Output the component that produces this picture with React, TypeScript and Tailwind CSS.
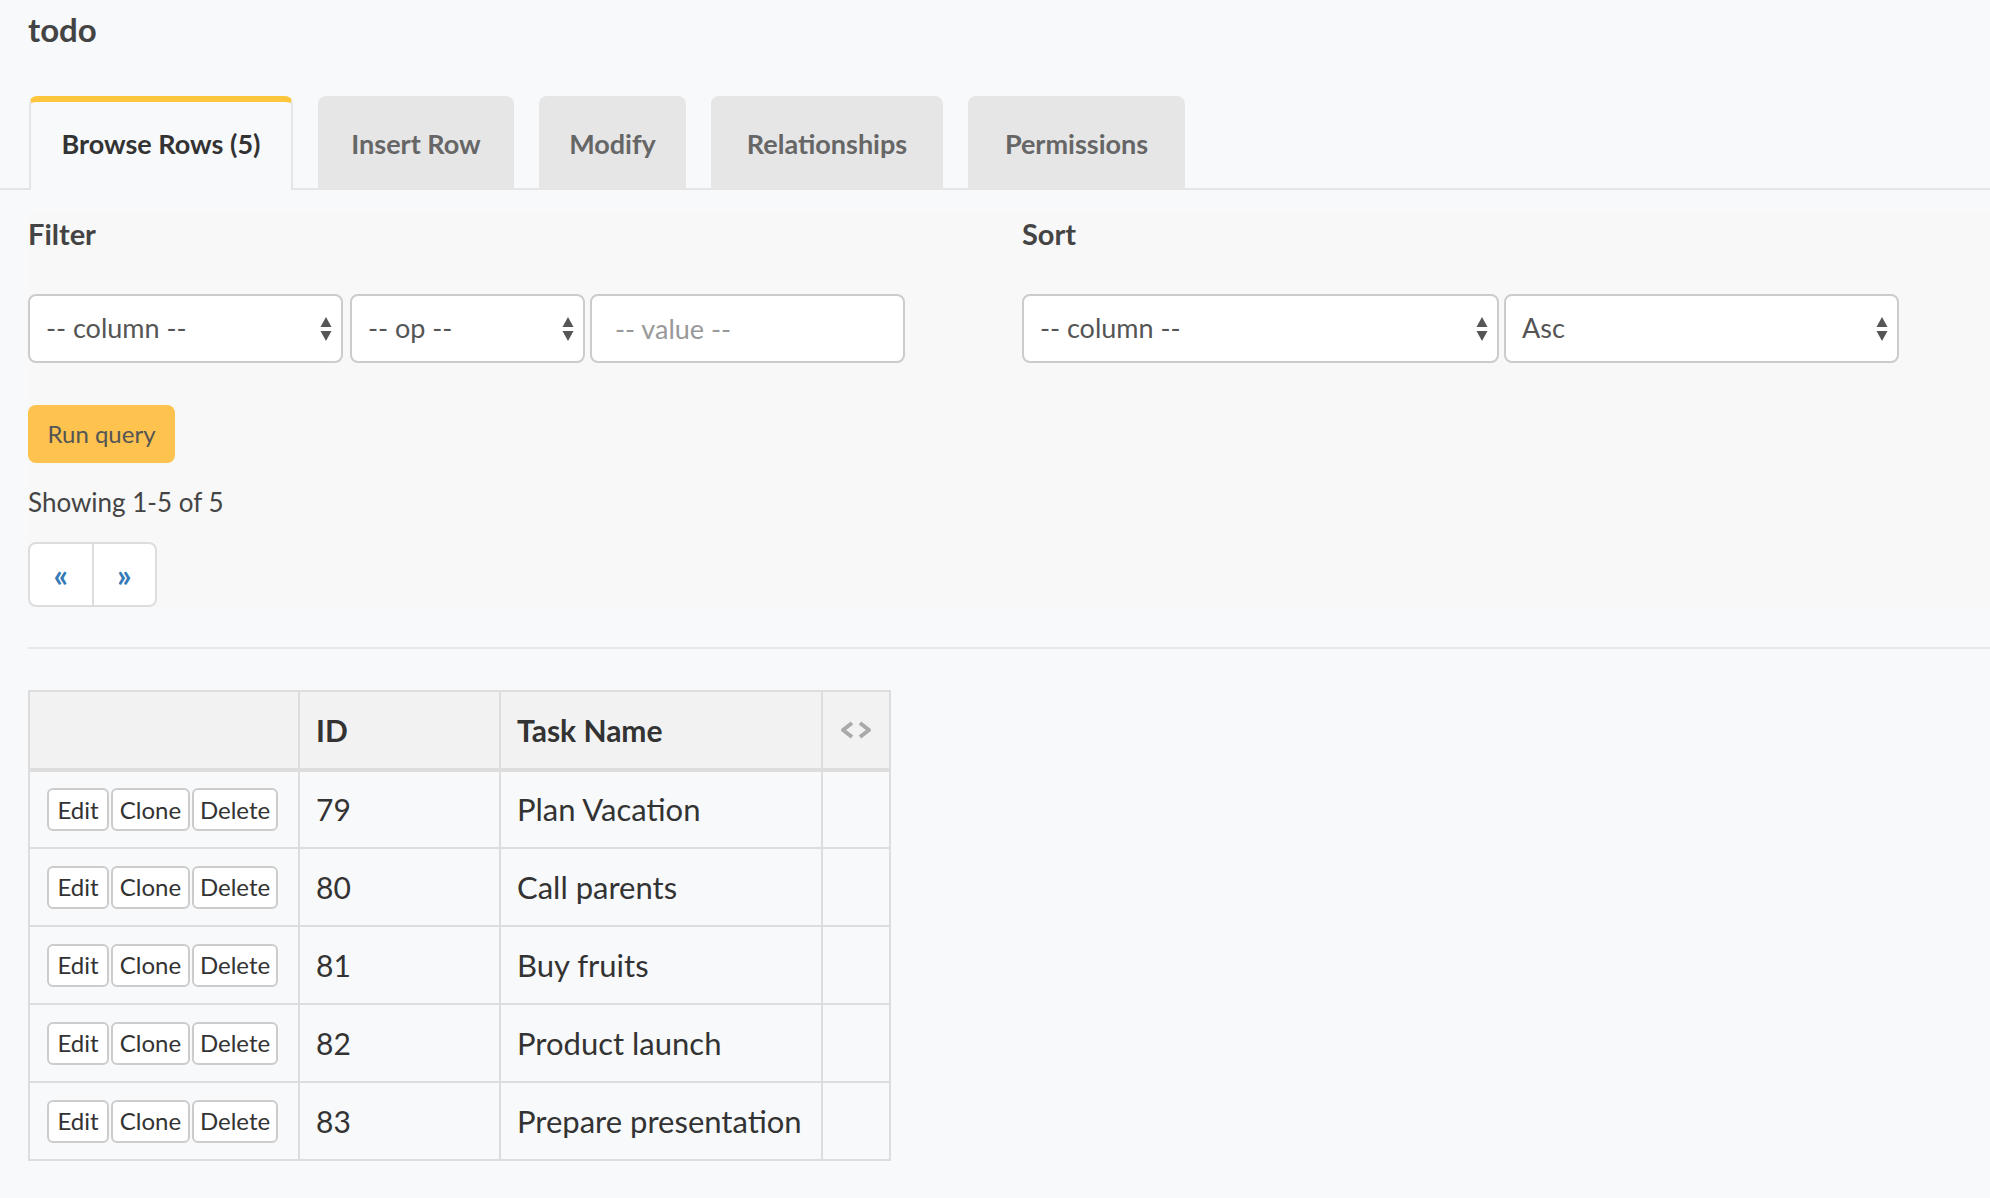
import { useState } from 'react';

interface TodoRow {
  id: number;
  name: string;
}

const rows: TodoRow[] = [
  { id: 79, name: 'Plan Vacation' },
  { id: 80, name: 'Call parents' },
  { id: 81, name: 'Buy fruits' },
  { id: 82, name: 'Product launch' },
  { id: 83, name: 'Prepare presentation' },
];

const tabs = [
  { label: 'Browse Rows (5)', w: 'w-[264px]' },
  { label: 'Insert Row', w: 'w-[196px]' },
  { label: 'Modify', w: 'w-[147px]' },
  { label: 'Relationships', w: 'w-[232px]' },
  { label: 'Permissions', w: 'w-[217px]' },
];

function SelectArrows() {
  return (
    <svg width="12" height="26" viewBox="0 0 12 26" className="shrink-0">
      <path d="M6 1 L11.5 11 L0.5 11 Z" fill="#555" />
      <path d="M0.5 15 L11.5 15 L6 25 Z" fill="#555" />
    </svg>
  );
}

function FakeSelect({ value, width }: { value: string; width: string }) {
  return (
    <div className={`${width} h-[69px] flex items-center justify-between bg-white border-2 border-[#ccc] rounded-[8px] pl-[16px] pr-[9px] text-[27px] text-[#555]`}>
      <span>{value}</span>
      <SelectArrows />
    </div>
  );
}

export default function App() {
  const [active] = useState(0);
  const btn = "h-[43px] bg-white border-2 border-[#ccc] rounded-[6px] text-[24px] text-[#333] flex items-center justify-center";

  return (
    <div className="min-h-screen bg-[#f8f9fb] font-['Lato','Open_Sans',sans-serif] text-[#333]">
      <h1 className="pl-[28px] pt-[9px] text-[33px] leading-[40px] font-bold text-[#444]">todo</h1>

      <div className="mt-[47px] flex items-end gap-[25px] pl-[29px] border-b-2 border-[#e5e5e5]">
        {tabs.map((t, i) =>
          i === active ? (
            <div
              key={t.label}
              className={`${t.w} h-[94px] -mb-[2px] pb-[3px] flex items-center justify-center bg-[#f8f9fb] border-t-[6px] border-t-[#ffc53d] border-x-2 border-x-[#e5e5e5] rounded-t-[8px] text-[27px] font-bold text-[#333]`}
            >
              {t.label}
            </div>
          ) : (
            <div
              key={t.label}
              className={`${t.w} h-[92px] pt-[4px] flex items-center justify-center bg-[#e6e6e6] rounded-t-[8px] text-[27px] font-bold text-[#666]`}
            >
              {t.label}
            </div>
          )
        )}
      </div>

      <div className="ml-[28px] mt-[22px] bg-[#f8f8f8] pt-[5px]">
        <div className="flex">
          <div className="w-[994px]">
            <div className="text-[29px] leading-[34px] font-bold text-[#444]">Filter</div>
            <div className="mt-[43px] flex items-center">
              <FakeSelect value="-- column --" width="w-[315px]" />
              <div className="ml-[7px]">
                <FakeSelect value="-- op --" width="w-[235px]" />
              </div>
              <input
                placeholder="-- value --"
                className="ml-[5px] w-[315px] h-[69px] bg-white border-2 border-[#ccc] rounded-[8px] px-[23px] text-[27px] text-[#555] placeholder:text-[#999] outline-none"
              />
            </div>
          </div>
          <div>
            <div className="text-[29px] leading-[34px] font-bold text-[#444]">Sort</div>
            <div className="mt-[43px] flex items-center gap-[5px]">
              <FakeSelect value="-- column --" width="w-[477px]" />
              <FakeSelect value="Asc" width="w-[395px]" />
            </div>
          </div>
        </div>

        <button className="mt-[42px] w-[147px] h-[58px] bg-[#fdc34e] rounded-[8px] text-[24px] text-[#555]">
          Run query
        </button>

        <div className="mt-[19px] text-[26px] leading-[40px] text-[#444]">Showing 1-5 of 5</div>

        <div className="mt-[20px] flex w-[129px] h-[65px] bg-white border-2 border-[#ddd] rounded-[8px] text-[32px] font-bold text-[#337ab7]">
          <div className="flex-1 flex items-center justify-center border-r-2 border-[#ddd]">«</div>
          <div className="flex-1 flex items-center justify-center">»</div>
        </div>
      </div>

      <div className="ml-[28px] mt-[40px] h-[2px] bg-[#e8e8e8]" />

      <table className="ml-[28px] mt-[41px] border-collapse border-2 border-[#ddd] text-[30px]">
        <thead>
          <tr className="bg-[#f2f2f2]">
            <th className="w-[270px] h-[79px] border-2 border-b-4 border-[#ddd]" />
            <th className="w-[201px] border-2 border-b-4 border-[#ddd] pl-[16px] text-left font-bold text-[#333]">ID</th>
            <th className="w-[322px] border-2 border-b-4 border-[#ddd] pl-[16px] text-left font-bold text-[#333]">Task Name</th>
            <th className="w-[68px] border-2 border-b-4 border-[#ddd]">
              <div className="flex justify-center">
                <svg width="34" height="18" viewBox="0 0 34 18">
                  <path d="M13 2 L4 9 L13 16" fill="none" stroke="#aaa" strokeWidth="4" strokeLinejoin="round" />
                  <path d="M21 2 L30 9 L21 16" fill="none" stroke="#aaa" strokeWidth="4" strokeLinejoin="round" />
                </svg>
              </div>
            </th>
          </tr>
        </thead>
        <tbody>
          {rows.map((r) => (
            <tr key={r.id} className="bg-[#f8f9fa]">
              <td className="h-[78px] border-2 border-[#ddd] pl-[17px]">
                <div className="flex gap-[2px]">
                  <button className={`${btn} w-[62px]`}>Edit</button>
                  <button className={`${btn} w-[79px]`}>Clone</button>
                  <button className={`${btn} w-[86px]`}>Delete</button>
                </div>
              </td>
              <td className="border-2 border-[#ddd] pl-[16px] text-[#333]">{r.id}</td>
              <td className="border-2 border-[#ddd] pl-[16px] text-[31px] text-[#333]">{r.name}</td>
              <td className="border-2 border-[#ddd]" />
            </tr>
          ))}
        </tbody>
      </table>
    </div>
  );
}
